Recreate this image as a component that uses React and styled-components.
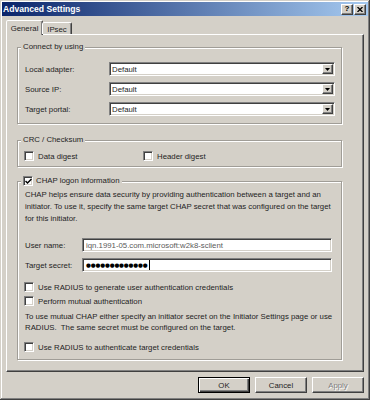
import React from 'react';
import styled, { createGlobalStyle, css } from 'styled-components';

const Global = createGlobalStyle`
  html, body { margin: 0; padding: 0; background: #d4d0c8; }
  body { font-family: "Liberation Sans", Arial, sans-serif; font-size: 7.8px; color: #1e1e1e; }
  * { box-sizing: border-box; }
`;

const raised = css`
  border: 1px solid;
  border-color: #fff #404040 #404040 #fff;
  box-shadow: inset -1px -1px #808080;
  background: #d4d0c8;
`;

const sunken = css`
  border: 1px solid;
  border-color: #808080 #fff #fff #808080;
  box-shadow: inset 1px 1px #404040, inset -1px -1px #d4d0c8;
  background: #fff;
`;

const Window = styled.div`
  width: 370px;
  height: 400px;
  background: #d4d0c8;
  padding: 2px;
  box-shadow: inset -1px -1px #404040, inset 1px 1px #d4d0c8, inset -2px -2px #808080, inset 2px 2px #fff;
  display: flex;
  flex-direction: column;
`;

const TitleBar = styled.div`
  height: 14px;
  display: flex;
  align-items: center;
  justify-content: space-between;
  padding: 0 2px 0 0;
  background: linear-gradient(to right, #0a246a, #a6caf0);
`;

const Title = styled.span`
  color: #fff;
  font-weight: bold;
  font-size: 8.6px;
  line-height: 14px;
  padding-left: 1px;
`;

const CapButtons = styled.div`
  display: flex;
  gap: 1px;
`;

const CapButton = styled.div`
  ${raised};
  width: 12px;
  height: 11px;
  display: flex;
  align-items: center;
  justify-content: center;
  font-weight: bold;
  font-size: 8px;
  line-height: 1;
  color: #000;
`;

const Body = styled.div`
  flex: 1;
  display: flex;
  flex-direction: column;
  padding: 4px 4px 0 4px;
`;

const TabStrip = styled.div`
  height: 14px;
  display: flex;
  align-items: flex-end;
`;

const Tab = styled.div`
  position: relative;
  z-index: 1;
  border: 1px solid;
  border-bottom: none;
  border-color: #fff #404040 transparent #fff;
  box-shadow: inset -1px 0 #808080;
  border-radius: 2px 2px 0 0;
  background: #d4d0c8;
  display: flex;
  justify-content: center;
  ${p => p.$active ? css`
    width: 37px;
    height: 15px;
    margin-bottom: -1px;
    padding-top: 3px;
  ` : css`
    width: 30px;
    height: 12px;
    padding-top: 2px;
    margin-left: -1px;
  `}
`;

const Panel = styled.div`
  height: 338px;
  border: 1px solid;
  border-color: #fff #404040 #404040 #fff;
  box-shadow: inset -1px -1px #808080;
  padding: 7px 21px 0 10px;
  display: flex;
  flex-direction: column;
`;

const Group = styled.fieldset`
  margin: ${p => p.$gap || 0}px 0 0 0;
  padding: 0 5px ${p => p.$pb || 7}px 6px;
  border: 1px solid #a09d97;
  box-shadow: inset 1px 1px #fff, 1px 1px #fff;
  min-width: 0;
`;

const Legend = styled.legend`
  margin-left: -3px;
  padding: 0 2px;
  height: 10px;
  line-height: 10px;
  background: #d4d0c8;
  display: flex;
  align-items: center;
  gap: 3px;
`;

const Stack = styled.div`
  display: flex;
  flex-direction: column;
  gap: ${p => p.$gap || 0}px;
  margin-top: ${p => p.$mt || 0}px;
`;

const FieldRow = styled.div`
  display: flex;
  align-items: center;
  height: 14px;
`;

const FieldLabel = styled.span`
  width: ${p => p.$w}px;
  flex: none;
  padding-left: 1px;
`;

const Combo = styled.div`
  ${sunken};
  width: 226px;
  height: 14px;
  display: flex;
  align-items: center;
  justify-content: space-between;
  padding: 1px 1px 1px 2px;
`;

const DropButton = styled.div`
  ${raised};
  width: 11px;
  height: 10px;
  display: flex;
  align-items: center;
  justify-content: center;
`;

const TextBox = styled.div`
  ${sunken};
  width: 250px;
  height: 14px;
  display: flex;
  align-items: center;
  padding: 0 3px;
  color: ${p => p.$muted ? '#5a5a5a' : '#000'};
  white-space: nowrap;
  overflow: hidden;
`;

const Dots = styled.span`
  font-size: 5.6px;
  letter-spacing: -0.15px;
  font-family: "DejaVu Sans", sans-serif;
`;

const Caret = styled.span`
  display: inline-block;
  width: 1px;
  height: 10px;
  background: #000;
  margin-left: 1px;
`;

const CheckRow = styled.label`
  display: flex;
  align-items: center;
  gap: 4px;
  height: 10px;
  width: ${p => (p.$w ? `${p.$w}px` : 'auto')};
`;

const Box = styled.span`
  ${sunken};
  width: 10px;
  height: 10px;
  flex: none;
  display: flex;
  align-items: center;
  justify-content: center;
`;

const Spread = styled.div`
  display: flex;
  align-items: center;
`;

const Para = styled.p`
  margin: ${p => p.$mt || 0}px 0 0 0;
  line-height: ${p => p.$lh || 12}px;
  white-space: nowrap;
  padding-left: 1px;
`;

const ButtonRow = styled.div`
  display: flex;
  justify-content: flex-end;
  gap: 5px;
  margin-top: 5px;
`;

const Button = styled.div`
  ${raised};
  width: 52px;
  height: 16px;
  display: flex;
  align-items: center;
  justify-content: center;
  ${p => p.$default && css`
    border: 1px solid #000;
    box-shadow: inset 1px 1px #fff, inset -1px -1px #404040, inset -2px -2px #808080;
  `}
  ${p => p.$disabled && css`
    color: #808080;
    text-shadow: 1px 1px #fff;
  `}
`;

const Check = ({ checked }) => (
  <Box>
    {checked && (
      <svg width="7" height="7" viewBox="0 0 7 7">
        <path d="M0.5 3 L2.5 5 L6.5 1" stroke="#000" strokeWidth="1.5" fill="none" />
      </svg>
    )}
  </Box>
);

const Arrow = () => (
  <svg width="5" height="3" viewBox="0 0 5 3">
    <path d="M0 0 H5 L2.5 3 Z" fill="#000" />
  </svg>
);

const ComboRow = ({ label }) => (
  <FieldRow>
    <FieldLabel $w={85}>{label}</FieldLabel>
    <Combo>
      <span>Default</span>
      <DropButton><Arrow /></DropButton>
    </Combo>
  </FieldRow>
);

export default function App() {
  return (
    <>
      <Global />
      <Window>
        <TitleBar>
          <Title>Advanced Settings</Title>
          <CapButtons>
            <CapButton>?</CapButton>
            <CapButton>
              <svg width="6" height="5" viewBox="0 0 6 5">
                <path d="M0.5 0 L5.5 5 M5.5 0 L0.5 5" stroke="#000" strokeWidth="1.3" />
              </svg>
            </CapButton>
          </CapButtons>
        </TitleBar>
        <Body>
          <TabStrip>
            <Tab $active>General</Tab>
            <Tab>IPsec</Tab>
          </TabStrip>
          <Panel>
            <Group>
              <Legend>Connect by using</Legend>
              <Stack $gap={6} $mt={10}>
                <ComboRow label="Local adapter:" />
                <ComboRow label="Source IP:" />
                <ComboRow label="Target portal:" />
              </Stack>
            </Group>
            <Group $gap={11} $pb={5}>
              <Legend>CRC / Checksum</Legend>
              <Stack $mt={6}>
                <Spread>
                  <CheckRow $w={119}><Check /> Data digest</CheckRow>
                  <CheckRow><Check /> Header digest</CheckRow>
                </Spread>
              </Stack>
            </Group>
            <Group $gap={9} $pb={7}>
              <Legend><Check checked /> CHAP logon information</Legend>
              <Para $mt={3} $lh={12}>
                CHAP helps ensure data security by providing authentication between a target and an<br />
                initiator. To use it, specify the same target CHAP secret that was configured on the target<br />
                for this initiator.
              </Para>
              <Stack $gap={6} $mt={13}>
                <FieldRow>
                  <FieldLabel $w={58}>User name:</FieldLabel>
                  <TextBox $muted>iqn.1991-05.com.microsoft:w2k8-sclient</TextBox>
                </FieldRow>
                <FieldRow>
                  <FieldLabel $w={58}>Target secret:</FieldLabel>
                  <TextBox><Dots>●●●●●●●●●●●●●</Dots><Caret /></TextBox>
                </FieldRow>
              </Stack>
              <Stack $gap={4} $mt={10}>
                <CheckRow><Check /> Use RADIUS to generate user authentication credentials</CheckRow>
                <CheckRow><Check /> Perform mutual authentication</CheckRow>
              </Stack>
              <Para $mt={5} $lh={11}>
                To use mutual CHAP either specify an initiator secret on the Initiator Settings page or use<br />
                RADIUS.&nbsp; The same secret must be configured on the target.
              </Para>
              <Stack $mt={9}>
                <CheckRow><Check /> Use RADIUS to authenticate target credentials</CheckRow>
              </Stack>
            </Group>
          </Panel>
          <ButtonRow>
            <Button $default>OK</Button>
            <Button>Cancel</Button>
            <Button $disabled>Apply</Button>
          </ButtonRow>
        </Body>
      </Window>
    </>
  );
}
